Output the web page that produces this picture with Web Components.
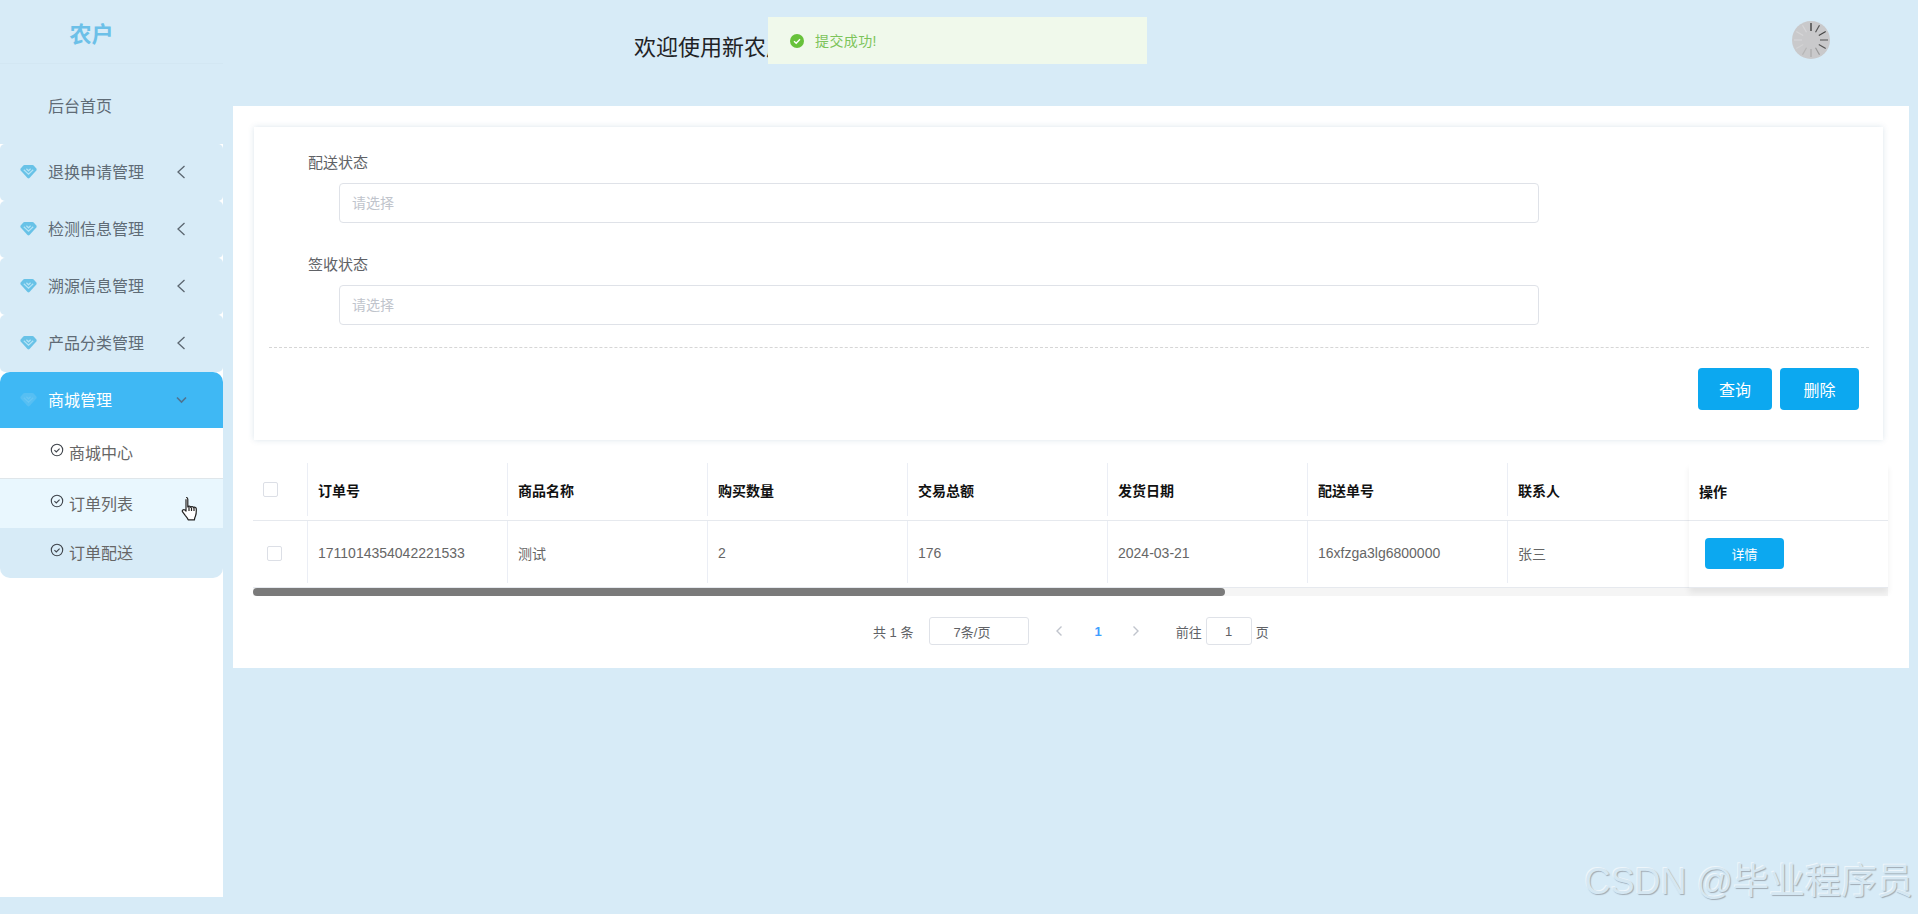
<!DOCTYPE html>
<html lang="zh">
<head>
<meta charset="utf-8">
<title>农户</title>
<style>
html, body { margin: 0; height: 914px; overflow: hidden; }
body {
    background: #d7ebf7;
    font-family: "Liberation Sans", "Noto Sans CJK SC", sans-serif;
    color: #606266;
}
</style>
</head>
<body>
<app-shell></app-shell>

<script>
const CHECK_ICON = `<svg width="14" height="14" viewBox="0 0 14 14" fill="none" stroke="#3f444b" stroke-width="1.1"><circle cx="7" cy="7" r="5.7"/><path d="M4.4 7.2l1.9 1.8 3.3-3.4"/></svg>`;

const GEM_ICON = `<svg width="17" height="16" viewBox="0 0 17 16"><path d="M4.5 1h8c.5 0 .9.2 1.2.5l2.600 3c.5.6.5 1.3 0 1.900L9.500 14c-.6.6-1.400.6-2 0L.7 6.400c-.5-.6-.5-1.300 0-1.900l2.600-3c.3-.3.7-.5 1.200-.5z" fill="var(--gem)"/><path d="M3.800 5.800l4.700 4.400 4.700-4.400M6.400 4.800l2.100 2 2.100-2" fill="none" stroke="var(--chevron)" stroke-width="1.200"/></svg>`;

class SideItem extends HTMLElement {
    constructor() {
        super();
        const shadow = this.attachShadow({ mode: 'open' });
        const open = this.hasAttribute('open');
        const arrow = open
            ? '<path d="M2 4.500l4.500 4.500L11 4.500"/>'
            : '<path d="M9.500 1L3 7l6.500 6"/>';
        shadow.innerHTML = `
            <style>
                :host {
                    --gem: #68c2e7;
                    --chevron: #b4e3f6;
                    display: flex;
                    align-items: center;
                    box-sizing: border-box;
                    height: 57px;
                    padding: 0 0 3px 20px;
                    background: #d7ebf7;
                    border-radius: 5px;
                    font-size: 16px;
                    color: #5f6b76;
                }
                :host([open]) {
                    --gem: #56bff3;
                    --chevron: #68c6f4;
                    height: 56px;
                    padding-bottom: 2px;
                    background: #3fb8f4;
                    color: #fff;
                    border-radius: 10px 10px 0 0;
                }
                .gem { display: flex; width: 28px; margin-top: 1px; }
                .label { flex: 1; }
                .arrow { display: flex; margin: 1px 35px 0 0; }
            </style>
            <span class="gem">${GEM_ICON}</span>
            <span class="label"><slot></slot></span>
            <svg class="arrow" width="13" height="14" viewBox="0 0 13 14" fill="none" stroke="${open ? '#4f7390' : '#5b6670'}" stroke-width="${open ? 1.6 : 1.3}">${arrow}</svg>
        `;
    }
}
customElements.define('side-item', SideItem);

class SubItem extends HTMLElement {
    constructor() {
        super();
        const shadow = this.attachShadow({ mode: 'open' });
        shadow.innerHTML = `
            <style>
                :host {
                    display: flex;
                    align-items: center;
                    gap: 5px;
                    height: 50px;
                    padding: 0 0 2px 50px;
                    box-sizing: border-box;
                    font-size: 16px;
                    color: #666;
                    background: #fff;
                }
                :host([tone="hover"]) {
                    background: #e9f7fe;
                    border-top: 1px solid #dfe6ea;
                }
                :host([tone="tint"]) {
                    background: #d7ebf7;
                    border-radius: 0 0 10px 10px;
                }
                svg { margin-top: -4px; }
            </style>
            ${CHECK_ICON}<slot></slot>
        `;
    }
}
customElements.define('sub-item', SubItem);

class SideBar extends HTMLElement {
    constructor() {
        super();
        const shadow = this.attachShadow({ mode: 'open' });
        shadow.innerHTML = `
            <style>
                :host {
                    display: flex;
                    flex-direction: column;
                    flex: none;
                    width: 223px;
                    height: 897px;
                    background: #fff;
                }
                .logo {
                    height: 64px;
                    padding-right: 40px;
                    display: flex;
                    align-items: center;
                    justify-content: center;
                    background: #d7ebf7;
                    border-bottom: 1px solid #d3e7f3;
                    font-size: 22px;
                    font-weight: 700;
                    color: #6cc0e8;
                    box-sizing: border-box;
                }
                .home {
                    height: 80px;
                    box-sizing: border-box;
                    padding: 2px 0 0 48px;
                    display: flex;
                    align-items: center;
                    background: #d7ebf7;
                    font-size: 16px;
                    color: #5f6b76;
                }
            </style>
            <div class="logo">农户</div>
            <div class="home">后台首页</div>
            <side-item>退换申请管理</side-item>
            <side-item>检测信息管理</side-item>
            <side-item>溯源信息管理</side-item>
            <side-item>产品分类管理</side-item>
            <side-item open>商城管理</side-item>
            <sub-item>商城中心</sub-item>
            <sub-item tone="hover">订单列表</sub-item>
            <sub-item tone="tint">订单配送</sub-item>
        `;
    }
}
customElements.define('side-bar', SideBar);

class TopBar extends HTMLElement {
    constructor() {
        super();
        const shadow = this.attachShadow({ mode: 'open' });
        let ticks = '';
        const shades = ['#2b2b2b', '#555', '#444', '#666', '#555', '#999', '#aaa', '#b5b5b5', '#d2d2d4', '#d6d6d8', '#d6d6d8', '#d6d6d8'];
        shades.forEach((shade, i) => {
            ticks += `<line x1="19" y1="2" x2="19" y2="10" stroke="${shade}" stroke-width="1.2" transform="rotate(${i * 30} 19 19)"/>`;
        });
        shadow.innerHTML = `
            <style>
                :host {
                    display: flex;
                    align-items: center;
                    height: 106px;
                    padding: 0 88px 26px 401px;
                    box-sizing: border-box;
                }
                .title {
                    flex: 1;
                    padding-top: 10px;
                    font-size: 22px;
                    color: #1f2326;
                }
            </style>
            <div class="title">欢迎使用新农产</div>
            <svg width="38" height="38" viewBox="0 0 38 38"><circle cx="19" cy="19" r="19" fill="#c9c9cb"/>${ticks}</svg>
        `;
    }
}
customElements.define('top-bar', TopBar);

class FormField extends HTMLElement {
    constructor() {
        super();
        const shadow = this.attachShadow({ mode: 'open' });
        shadow.innerHTML = `
            <style>
                :host { display: block; margin-bottom: 33px; }
                .label {
                    font-size: 15px;
                    line-height: 18px;
                    color: #606266;
                    margin: 0 0 11px 54px;
                }
                .select {
                    width: 1200px;
                    height: 40px;
                    margin-left: 85px;
                    box-sizing: border-box;
                    border: 1px solid #dfe2e8;
                    border-radius: 4px;
                    padding: 0 0 2px 12px;
                    display: flex;
                    align-items: center;
                    font-size: 14px;
                    color: #c0c4cc;
                }
            </style>
            <div class="label">${this.getAttribute('label')}</div>
            <div class="select">请选择</div>
        `;
    }
}
customElements.define('form-field', FormField);

class FlatButton extends HTMLElement {
    constructor() {
        super();
        const shadow = this.attachShadow({ mode: 'open' });
        shadow.innerHTML = `
            <style>
                :host {
                    display: inline-flex;
                    align-items: center;
                    justify-content: center;
                    width: var(--w, 74px);
                    height: var(--h, 42px);
                    background: #0ca8f0;
                    border-radius: 4px;
                    color: #fff;
                    font-size: var(--fs, 16px);
                }
            </style>
            <slot></slot>
        `;
    }
}
customElements.define('flat-button', FlatButton);

class OrderTable extends HTMLElement {
    constructor() {
        super();
        const shadow = this.attachShadow({ mode: 'open' });
        const heads = ['订单号', '商品名称', '购买数量', '交易总额', '发货日期', '配送单号', '联系人'];
        const cells = ['1711014354042221533', '测试', '2', '176', '2024-03-21', '16xfzga3lg6800000', '张三'];
        shadow.innerHTML = `
            <style>
                :host {
                    display: block;
                    position: relative;
                    font-size: 14px;
                    margin: 0 21px 0 20px;
                }
                .row {
                    display: grid;
                    grid-template-columns: 54px repeat(7, 200px) 181px;
                    border-bottom: 1px solid #e6e9ee;
                }
                .head { height: 57px; color: #111; font-weight: 700; font-size: 14px; }
                .body { height: 66px; color: #666; }
                .cell {
                    display: flex;
                    align-items: center;
                    padding-left: 10px;
                    margin-bottom: 4px;
                    border-left: 1px solid #ebeef5;
                }
                .body .cell { padding-top: 2px; }
                .box { border-left: none; padding-left: 10px; }
                .body .box { padding-left: 14px; }
                .check {
                    width: 13px;
                    height: 13px;
                    border: 1px solid #dcdfe6;
                    border-radius: 2px;
                }
                .track {
                    height: 8px;
                    background: #f5f5f5;
                }
                .thumb {
                    width: 972px;
                    height: 8px;
                    background: #7a7a7a;
                    border-radius: 4px;
                }
                .fixed {
                    position: absolute;
                    top: 0;
                    right: 0;
                    width: 199px;
                    height: 125px;
                    background: #fff;
                    box-shadow: 0 5px 6px rgba(0, 0, 0, 0.07);
                }
                .fixed .head, .fixed .body {
                    display: flex;
                    align-items: center;
                    box-sizing: border-box;
                    padding-left: 10px;
                    border-bottom: 1px solid #e6e9ee;
                }
                .fixed .head { height: 58px; padding-bottom: 2px; }
                .fixed .body { padding: 0 0 2px 16px; height: 67px; }
            </style>
            <div class="row head">
                <div class="cell box"><span class="check"></span></div>
                ${heads.map(h => `<div class="cell">${h}</div>`).join('')}
                <div></div>
            </div>
            <div class="row body">
                <div class="cell box"><span class="check"></span></div>
                ${cells.map(c => `<div class="cell">${c}</div>`).join('')}
                <div></div>
            </div>
            <div class="track"><div class="thumb"></div></div>
            <div class="fixed">
                <div class="head">操作</div>
                <div class="body"><flat-button style="--w:79px;--h:31px;--fs:13px">详情</flat-button></div>
            </div>
        `;
    }
}
customElements.define('order-table', OrderTable);

class PagerBar extends HTMLElement {
    constructor() {
        super();
        const shadow = this.attachShadow({ mode: 'open' });
        shadow.innerHTML = `
            <style>
                :host {
                    display: flex;
                    align-items: center;
                    height: 30px;
                    margin: 20px 0 0 640px;
                    font-size: 13px;
                    color: #606266;
                }
                .size, .jump {
                    display: flex;
                    align-items: center;
                    justify-content: center;
                    box-sizing: border-box;
                    height: 28px;
                    border: 1px solid #dfe2e8;
                    border-radius: 3px;
                    font-size: 13px;
                }
                .size { width: 100px; margin: 0 26px 0 16px; padding-right: 15px; }
                .jump { width: 46px; margin: 0 4px 0 4px; }
                .num { color: #409eff; font-weight: 700; margin: 0 30px 0 31px; }
                svg { display: block; }
                .next { margin-right: 36px; }
            </style>
            <span>共 1 条</span>
            <span class="size">7条/页</span>
            <svg width="8" height="12" viewBox="0 0 8 12" fill="none" stroke="#c0c4cc" stroke-width="1.4"><path d="M6.5 1.5L2 6l4.5 4.500"/></svg>
            <span class="num">1</span>
            <svg class="next" width="8" height="12" viewBox="0 0 8 12" fill="none" stroke="#c0c4cc" stroke-width="1.4"><path d="M1.5 1.5L6 6l-4.500 4.500"/></svg>
            <span>前往</span>
            <span class="jump">1</span>
            <span>页</span>
        `;
    }
}
customElements.define('pager-bar', PagerBar);

class ContentPanel extends HTMLElement {
    constructor() {
        super();
        const shadow = this.attachShadow({ mode: 'open' });
        shadow.innerHTML = `
            <style>
                :host {
                    display: block;
                    height: 562px;
                    background: #fff;
                    margin-right: 9px;
                    padding-top: 21px;
                    box-sizing: border-box;
                }
                .card {
                    margin: 0 26px 23px 21px;
                    height: 313px;
                    box-sizing: border-box;
                    padding-top: 27px;
                    background: #fff;
                    box-shadow: 0 0 6px rgba(60, 110, 150, 0.18);
                }
                .rule {
                    margin: -11px 14px 0 15px;
                    border-top: 1px dashed #d6d6d6;
                }
                .actions {
                    display: flex;
                    justify-content: flex-end;
                    gap: 8px;
                    margin: 20px 24px 0 0;
                }
            </style>
            <div class="card">
                <form-field label="配送状态"></form-field>
                <form-field label="签收状态"></form-field>
                <div class="rule"></div>
                <div class="actions">
                    <flat-button>查询</flat-button>
                    <flat-button style="--w:79px">删除</flat-button>
                </div>
            </div>
            <order-table></order-table>
            <pager-bar></pager-bar>
        `;
    }
}
customElements.define('content-panel', ContentPanel);

class AppShell extends HTMLElement {
    constructor() {
        super();
        const shadow = this.attachShadow({ mode: 'open' });
        shadow.innerHTML = `
            <style>
                :host { display: flex; height: 914px; position: relative; overflow: hidden; }
                main { flex: 1; margin-left: 10px; min-width: 0; }
                .toast {
                    position: absolute;
                    left: 768px;
                    top: 17px;
                    width: 379px;
                    height: 47px;
                    box-sizing: border-box;
                    padding-left: 22px;
                    background: #f0f9eb;
                    color: #7cc45a;
                    display: flex;
                    align-items: center;
                    gap: 11px;
                    font-size: 14px;
                    letter-spacing: 0.4px;
                }
                .toast span { margin-top: -1px; }
                .cursor { position: absolute; left: 181px; top: 496px; }
                .mark {
                    position: absolute;
                    right: 5px;
                    bottom: 11px;
                    font-size: 36px;
                    line-height: 42px;
                    color: #d5e7f2;
                    text-shadow: 1px 1px 1px #a0abb4, -1px -1px 0 #eef6fb;
                }
            </style>
            <side-bar></side-bar>
            <main>
                <top-bar></top-bar>
                <content-panel></content-panel>
            </main>
            <div class="toast">
                <svg width="14" height="14" viewBox="0 0 14 14"><circle cx="7" cy="7" r="7" fill="#67c23a"/><path d="M4 7.2l2.2 2.100L10 5.300" fill="none" stroke="#fff" stroke-width="1.4"/></svg>
                <span>提交成功!</span>
            </div>
            <svg class="cursor" width="20" height="26" viewBox="0 0 20 26" fill="#fff" stroke="#222" stroke-width="1.2" stroke-linejoin="round"><path d="M5 1.500c1 0 1.800.8 1.800 1.800V11c.3-1 2.600-1.200 2.900.3.4-1 2.600-1 2.900.4.5-.8 2.600-.6 2.700 1.200.1 3 .1 5-.8 7-.7 1.500-1.100 2.600-1.100 4H7.200c-.3-1.400-1.400-2.800-3-4.600L1.600 15.800c-1-1.300.8-3 2.400-1.800l1 1V3.300"/><path d="M8 11v4M10.500 11.500v3.500M13 12v3" fill="none"/></svg>
            <div class="mark">CSDN @毕业程序员</div>
        `;
    }
}
customElements.define('app-shell', AppShell);
</script>
</body>
</html>
